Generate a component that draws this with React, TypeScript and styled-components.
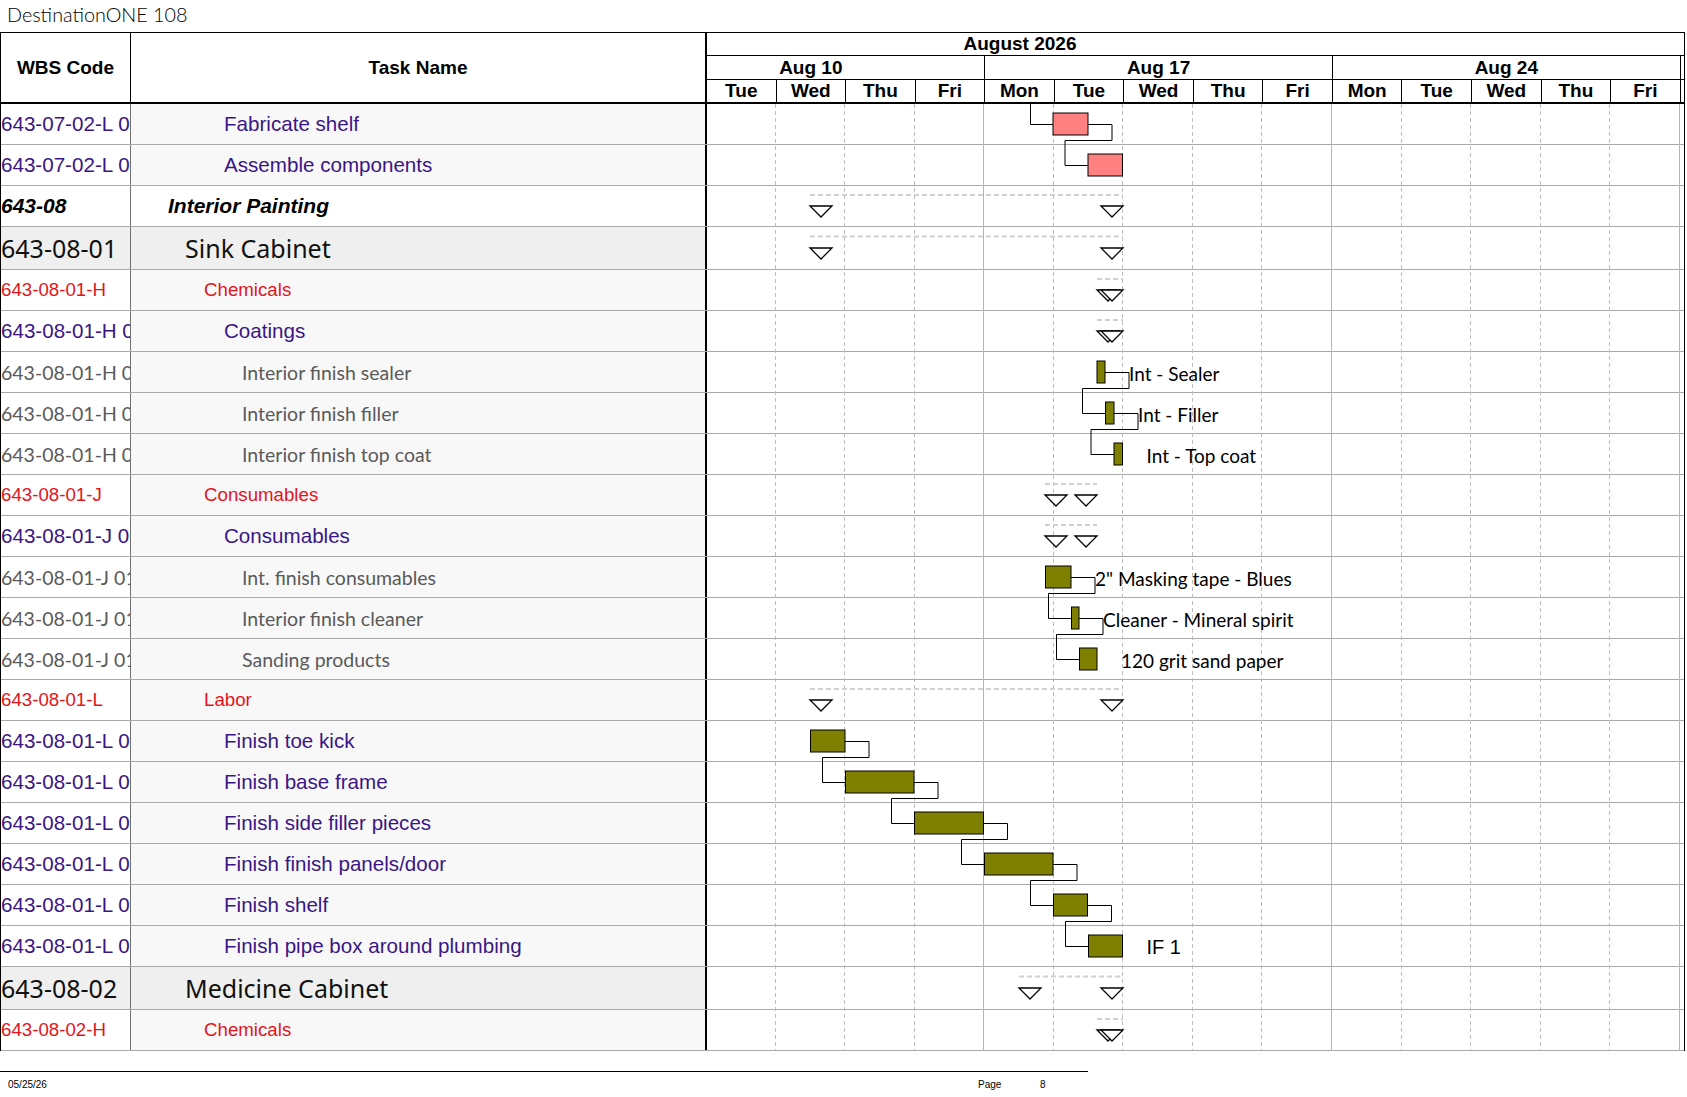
import styled, { createGlobalStyle, css } from "styled-components";

const DAY_W = 69.55;
const GRID_X0 = 706;
const BODY_TOP = 104;
const BODY_LEFT = 707;
const CHART_W = 977;

const GlobalStyle = createGlobalStyle`
  html, body {
    margin: 0;
    padding: 0;
    background: #fff;
  }
  body {
    font-family: "Liberation Sans", Arial, sans-serif;
    overflow: hidden;
  }
`;

type Kind = "purple" | "red" | "grey" | "phase" | "group";

type RowData = {
  wbs: string;
  name: string;
  kind: Kind;
};

const rows: RowData[] = [
  { wbs: "643-07-02-L 01", name: "Fabricate shelf", kind: "purple" },
  { wbs: "643-07-02-L 02", name: "Assemble components", kind: "purple" },
  { wbs: "643-08", name: "Interior Painting", kind: "phase" },
  { wbs: "643-08-01", name: "Sink Cabinet", kind: "group" },
  { wbs: "643-08-01-H", name: "Chemicals", kind: "red" },
  { wbs: "643-08-01-H 01", name: "Coatings", kind: "purple" },
  { wbs: "643-08-01-H 01 01", name: "Interior finish sealer", kind: "grey" },
  { wbs: "643-08-01-H 01 02", name: "Interior finish filler", kind: "grey" },
  { wbs: "643-08-01-H 01 03", name: "Interior finish top coat", kind: "grey" },
  { wbs: "643-08-01-J", name: "Consumables", kind: "red" },
  { wbs: "643-08-01-J 01", name: "Consumables", kind: "purple" },
  { wbs: "643-08-01-J 01 01", name: "Int. finish consumables", kind: "grey" },
  { wbs: "643-08-01-J 01 02", name: "Interior finish cleaner", kind: "grey" },
  { wbs: "643-08-01-J 01 03", name: "Sanding products", kind: "grey" },
  { wbs: "643-08-01-L", name: "Labor", kind: "red" },
  { wbs: "643-08-01-L 01", name: "Finish toe kick", kind: "purple" },
  { wbs: "643-08-01-L 02", name: "Finish base frame", kind: "purple" },
  { wbs: "643-08-01-L 03", name: "Finish side filler pieces", kind: "purple" },
  { wbs: "643-08-01-L 04", name: "Finish finish panels/door", kind: "purple" },
  { wbs: "643-08-01-L 05", name: "Finish shelf", kind: "purple" },
  { wbs: "643-08-01-L 06", name: "Finish pipe box around plumbing", kind: "purple" },
  { wbs: "643-08-02", name: "Medicine Cabinet", kind: "group" },
  { wbs: "643-08-02-H", name: "Chemicals", kind: "red" },
];

const rowHeight = (k: Kind) => (k === "group" ? 43 : 41);

const tops: number[] = [];
rows.reduce((y, r) => {
  tops.push(y);
  return y + rowHeight(r.kind);
}, BODY_TOP);
const BODY_H = rows.reduce((h, r) => h + rowHeight(r.kind), 0);

// timescale; the last entry of each tier is only a sliver at the right edge
const days = ["Tue", "Wed", "Thu", "Fri", "Mon", "Tue", "Wed", "Thu", "Fri", "Mon", "Tue", "Wed", "Thu", "Fri", ""];
const weeks = ["Aug 10", "Aug 17", "Aug 24", ""];

// chart data (page x coordinates)
const summaries = [
  { row: 2, start: 810, end: 1123 },
  { row: 3, start: 810, end: 1123 },
  { row: 4, start: 1097, end: 1123 },
  { row: 5, start: 1097, end: 1123 },
  { row: 9, start: 1045, end: 1097 },
  { row: 10, start: 1045, end: 1097 },
  { row: 14, start: 810, end: 1123 },
  { row: 21, start: 1019, end: 1123 },
  { row: 22, start: 1097, end: 1123 },
];

type Bar = { row: number; start: number; end: number; color: string; label?: string; sans?: boolean };

const PINK = "#ff8080";
const OLIVE = "#808000";

const bars: Bar[] = [
  { row: 0, start: 1053, end: 1088, color: PINK },
  { row: 1, start: 1088, end: 1122.5, color: PINK },
  { row: 6, start: 1097, end: 1105, color: OLIVE, label: "Int - Sealer" },
  { row: 7, start: 1105.5, end: 1114, color: OLIVE, label: "Int - Filler" },
  { row: 8, start: 1114, end: 1122.5, color: OLIVE, label: "Int - Top coat" },
  { row: 11, start: 1045.5, end: 1071, color: OLIVE, label: "2\" Masking tape - Blues" },
  { row: 12, start: 1071.5, end: 1079, color: OLIVE, label: "Cleaner - Mineral spirit" },
  { row: 13, start: 1079.5, end: 1097, color: OLIVE, label: "120 grit sand paper" },
  { row: 15, start: 810.5, end: 845, color: OLIVE },
  { row: 16, start: 845.5, end: 914, color: OLIVE },
  { row: 17, start: 914.5, end: 983.5, color: OLIVE },
  { row: 18, start: 984.5, end: 1053, color: OLIVE },
  { row: 19, start: 1053.5, end: 1087.5, color: OLIVE },
  { row: 20, start: 1088.5, end: 1122.5, color: OLIVE, label: "IF 1", sans: true },
];

const links: [number, number][] = [
  [0, 1],
  [2, 3],
  [3, 4],
  [5, 6],
  [6, 7],
  [8, 9],
  [9, 10],
  [10, 11],
  [11, 12],
  [12, 13],
];

const Page = styled.div`
  width: 1687px;
  height: 1097px;
  background: #fff;
`;

const Title = styled.div`
  height: 32px;
  padding-left: 7px;
  box-sizing: border-box;
  font-family: Lato, "Open Sans", sans-serif;
  font-weight: 300;
  font-size: 19.8px;
  line-height: 29px;
  color: #000;
`;

const Sheet = styled.div`
  width: 1685px;
  box-sizing: border-box;
  border: 1px solid #000;
  border-bottom: none;
`;

const Header = styled.div`
  display: grid;
  grid-template-columns: 130px 576px ${CHART_W}px;
  height: 71px;
  box-sizing: border-box;
  border-bottom: 2px solid #000;
`;

const HeadCell = styled.div<{ $thick?: boolean }>`
  display: flex;
  align-items: center;
  justify-content: center;
  border-right: ${({ $thick }) => ($thick ? "2px" : "1px")} solid #000;
  font-weight: bold;
  font-size: 19px;
  color: #000;
`;

const Timescale = styled.div`
  display: flex;
  flex-direction: column;
  overflow: hidden;
`;

const Tier = styled.div<{ $h: number; $shift: number; $last?: boolean }>`
  display: flex;
  height: ${({ $h }) => $h}px;
  flex: 0 0 ${({ $h }) => $h}px;
  margin-left: ${({ $shift }) => -$shift}px;
  box-sizing: border-box;
  border-bottom: ${({ $last }) => ($last ? "none" : "1px solid #000")};
`;

const TierCell = styled.div<{ $span: number; $open?: boolean }>`
  flex: 0 0 ${({ $span }) => $span * DAY_W}px;
  box-sizing: border-box;
  border-right: ${({ $open }) => ($open ? "none" : "1px solid #000")};
  display: flex;
  align-items: center;
  justify-content: center;
  font-weight: bold;
  font-size: 19px;
  color: #000;
  white-space: nowrap;
`;

const Body = styled.div`
  position: relative;
`;

const kindText = {
  purple: css`
    font-family: "Liberation Sans", Arial, sans-serif;
    font-size: 20.6px;
    color: #3a1685;
  `,
  red: css`
    font-family: "Liberation Sans", Arial, sans-serif;
    font-size: 18.7px;
    color: #e3141c;
  `,
  grey: css`
    font-family: Lato, "Open Sans", sans-serif;
    font-size: 19.5px;
    color: #5a5a5a;
  `,
  phase: css`
    font-family: "Liberation Sans", Arial, sans-serif;
    font-size: 21px;
    font-weight: bold;
    font-style: italic;
    color: #000;
  `,
  group: css`
    font-family: "Noto Sans", "Open Sans", sans-serif;
    font-size: 25px;
    color: #111;
  `,
};

const indent: Record<Kind, number> = {
  phase: 37,
  group: 54,
  red: 73,
  purple: 93,
  grey: 111,
};

const Row = styled.div<{ $kind: Kind }>`
  display: grid;
  grid-template-columns: 130px 576px ${CHART_W}px;
  height: ${({ $kind }) => rowHeight($kind)}px;
  box-sizing: border-box;
  border-bottom: 1px solid #a9a9a9;
  ${({ $kind }) => kindText[$kind]}

  &:last-child {
    border-bottom-color: #000;
  }
`;

const WbsCell = styled.div<{ $kind: Kind }>`
  display: flex;
  align-items: center;
  overflow: hidden;
  white-space: nowrap;
  border-right: 1px solid #707070;
  background: ${({ $kind }) => ($kind === "group" ? "#efefef" : "#fff")};
`;

const NameCell = styled.div<{ $kind: Kind }>`
  display: flex;
  align-items: center;
  padding-left: ${({ $kind }) => indent[$kind]}px;
  border-right: 2px solid #000;
  white-space: nowrap;
  background: ${({ $kind }) =>
    $kind === "group" ? "#efefef" : $kind === "phase" ? "#fff" : "#f8f8f8"};
`;

const ChartCell = styled.div`
  background: #fff;
`;

const ChartLayer = styled.svg`
  position: absolute;
  top: 0;
  left: ${BODY_LEFT - 1}px;
  pointer-events: none;
`;

const BarLabel = styled.text<{ $sans?: boolean }>`
  font-family: ${({ $sans }) => ($sans ? '"Liberation Sans", Arial, sans-serif' : 'Lato, "Open Sans", sans-serif')};
  font-size: ${({ $sans }) => ($sans ? 20 : 19)}px;
  fill: #000;
`;

const Footer = styled.div`
  margin-top: 20px;
  width: 1088px;
  border-top: 1px solid #000;
  display: grid;
  grid-template-columns: 978px 62px auto;
  padding-top: 7px;
  font-family: "Liberation Sans", Arial, sans-serif;
  font-size: 10px;
  line-height: 11px;
  color: #000;
`;

const FooterText = styled.span<{ $pad?: number }>`
  padding-left: ${({ $pad }) => $pad ?? 0}px;
`;

function GanttChart() {
  const bottom = BODY_TOP + BODY_H - 1;
  const gridLines = [];
  for (let k = 1; k <= 14; k++) {
    const x = Math.round(GRID_X0 + k * DAY_W) - 0.5;
    const week = k === 4 || k === 9 || k === 14;
    gridLines.push(
      <line
        key={k}
        x1={x}
        x2={x}
        y1={BODY_TOP}
        y2={bottom}
        stroke={week ? "#b4b4b4" : "#bdbdbd"}
        strokeWidth={1}
        strokeDasharray={week ? undefined : "4 3"}
      />
    );
  }

  const mid = (r: number) => tops[r] + 20;

  return (
    <ChartLayer
      width={CHART_W}
      height={BODY_H}
      viewBox={`${BODY_LEFT} ${BODY_TOP} ${CHART_W} ${BODY_H}`}
    >
      {gridLines}

      {summaries.map((s, i) => {
        const big = rows[s.row].kind === "group";
        const ly = tops[s.row] + (big ? 9.5 : 9);
        const ty = tops[s.row] + (big ? 21 : 20);
        return (
          <g key={`s${i}`}>
            <line
              x1={s.start}
              x2={s.end}
              y1={ly}
              y2={ly}
              stroke="#d0d0d0"
              strokeWidth={2}
              strokeDasharray="5 3"
            />
            <polygon
              points={`${s.start},${ty} ${s.start + 22},${ty} ${s.start + 11},${ty + 11}`}
              fill="#fff"
              stroke="#000"
              strokeWidth={1.3}
            />
            <polygon
              points={`${s.end - 22},${ty} ${s.end},${ty} ${s.end - 11},${ty + 11}`}
              fill="#fff"
              stroke="#000"
              strokeWidth={1.3}
            />
          </g>
        );
      })}

      {/* link coming in from the previous page */}
      <path d={`M1030.5,${BODY_TOP} V${mid(0) + 0.5} H1053`} fill="none" stroke="#000" strokeWidth={1} />

      {links.map(([a, b]) => {
        const A = bars[a];
        const B = bars[b];
        const turn = tops[A.row] + rowHeight(rows[A.row].kind) - 5;
        const out = A.end + 24;
        const back = B.start - 23;
        return (
          <path
            key={`l${a}`}
            d={`M${A.end},${mid(A.row) + 0.5} H${out} V${turn + 0.5} H${back} V${mid(B.row) + 0.5} H${B.start}`}
            fill="none"
            stroke="#000"
            strokeWidth={1}
          />
        );
      })}

      {bars.map((b, i) => (
        <g key={`b${i}`}>
          <rect
            x={b.start}
            y={tops[b.row] + 9}
            width={b.end - b.start}
            height={22}
            fill={b.color}
            stroke="#000"
            strokeWidth={1}
          />
          {b.label && (
            <BarLabel $sans={b.sans} x={b.end + 24} y={mid(b.row) + 1} dominantBaseline="central">
              {b.label}
            </BarLabel>
          )}
        </g>
      ))}
    </ChartLayer>
  );
}

export default function App() {
  return (
    <Page>
      <GlobalStyle />
      <Title>DestinationONE 108</Title>
      <Sheet>
        <Header>
          <HeadCell>WBS Code</HeadCell>
          <HeadCell $thick>Task Name</HeadCell>
          <Timescale>
            <Tier $h={23} $shift={6 * DAY_W}>
              <TierCell $span={21} $open>
                August 2026
              </TierCell>
            </Tier>
            <Tier $h={24} $shift={DAY_W}>
              {weeks.map((w, i) => (
                <TierCell key={i} $span={5}>
                  {w}
                </TierCell>
              ))}
            </Tier>
            <Tier $h={22} $shift={0} $last>
              {days.map((d, i) => (
                <TierCell key={i} $span={1}>
                  {d}
                </TierCell>
              ))}
            </Tier>
          </Timescale>
        </Header>
        <Body>
          {rows.map((r, i) => (
            <Row key={i} $kind={r.kind}>
              <WbsCell $kind={r.kind}>{r.wbs}</WbsCell>
              <NameCell $kind={r.kind}>{r.name}</NameCell>
              <ChartCell />
            </Row>
          ))}
          <GanttChart />
        </Body>
      </Sheet>
      <Footer>
        <FooterText $pad={8}>05/25/26</FooterText>
        <FooterText>Page</FooterText>
        <FooterText>8</FooterText>
      </Footer>
    </Page>
  );
}
